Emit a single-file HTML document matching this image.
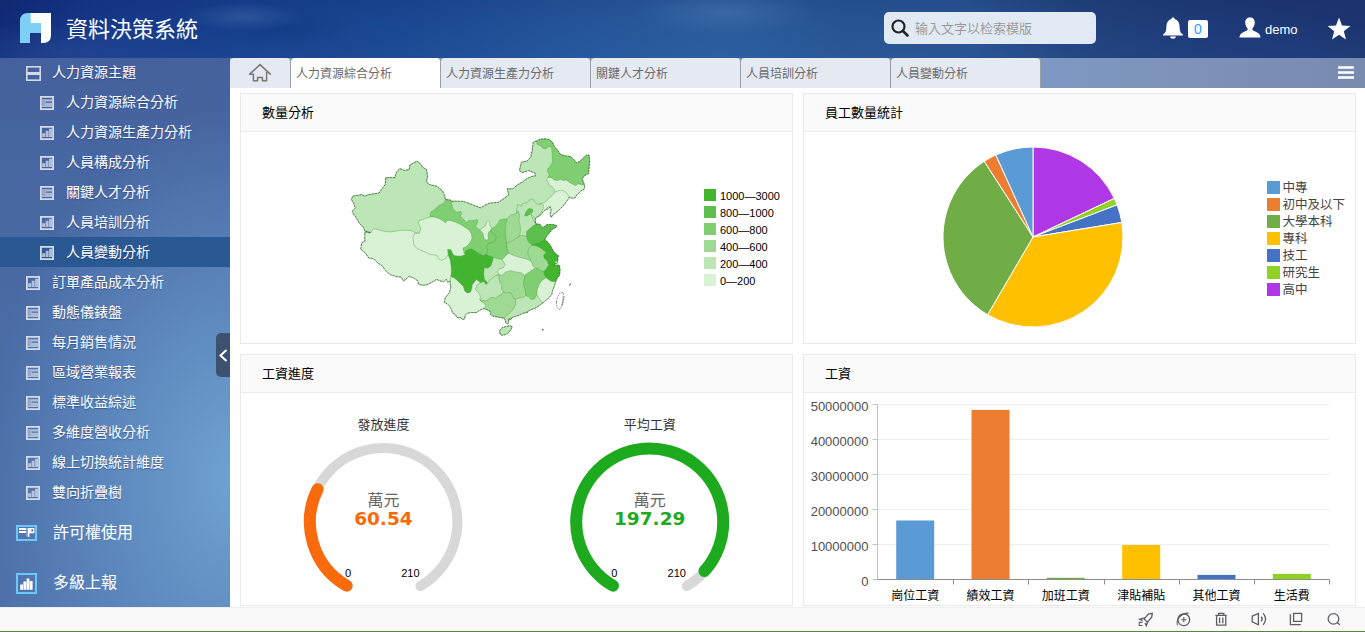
<!DOCTYPE html>
<html lang="zh-Hant">
<head>
<meta charset="utf-8">
<title>資料決策系統</title>
<style>
*{box-sizing:border-box;margin:0;padding:0}
html,body{width:1365px;height:632px;overflow:hidden;background:#fff;font-family:"Liberation Sans","Noto Sans CJK TC",sans-serif;}
#hdr{position:absolute;left:0;top:0;width:1365px;height:58px;
 background:
  radial-gradient(ellipse 60px 14px at 245px 17px,rgba(70,110,170,.45),rgba(70,110,170,0) 100%),
  radial-gradient(ellipse 70px 22px at 285px 28px,rgba(10,50,120,.35),rgba(10,50,120,0) 100%),
  radial-gradient(ellipse 90px 22px at 725px 12px,rgba(80,125,180,.4),rgba(80,125,180,0) 100%),
  radial-gradient(ellipse 140px 30px at 60px 52px,rgba(50,90,160,.3),rgba(50,90,160,0) 100%),
  linear-gradient(180deg,rgba(0,10,60,.08) 0%,rgba(0,0,0,0) 40%,rgba(80,130,200,.08) 100%),
  linear-gradient(90deg,#122a76 0%,#153789 7%,#17408c 18%,#1a4892 30%,#245498 42%,#2a5c9c 53%,#265492 62%,#27528f 71%,#21407c 80%,#1e3a78 88%,#1c3572 100%);}
#logo{position:absolute;left:20px;top:13px}
#ttl{position:absolute;left:66px;top:15px;font-size:22px;line-height:30px;color:#fff;letter-spacing:0px;white-space:nowrap}
#srch{position:absolute;left:884px;top:12px;width:212px;height:32px;border-radius:5px;background:#e1eaf4}
#srch span{position:absolute;left:31px;top:8px;font-size:13px;line-height:18px;color:#9a9a9a;white-space:nowrap;font-family:"Liberation Sans","Noto Sans CJK SC",sans-serif}
#srch svg{position:absolute;left:6px;top:6px}
.hi{position:absolute}
#badge{position:absolute;left:1188px;top:20px;width:20px;height:18px;background:#fff;border-radius:2px;color:#2a9df4;font-size:14px;line-height:18px;text-align:center}
#uname{position:absolute;left:1265px;top:22px;font-size:13px;line-height:16px;color:#fff}
#side{position:absolute;left:0;top:58px;width:230px;height:549px;overflow:hidden;
 background:
  radial-gradient(ellipse 250px 370px at 235px 420px,rgba(114,168,214,.9),rgba(114,168,214,0) 100%),
  linear-gradient(180deg,#45619d 0%,#4766a2 20%,#4a6ba6 50%,#4d70aa 100%);}
.it{position:absolute;left:0;width:230px;height:30px;color:#fff;font-size:14px;line-height:30px;white-space:nowrap;text-shadow:0 1px 1px rgba(30,50,100,.5)}
.it svg{position:absolute;top:8.5px}
.it.l1 svg{left:26px}.it.l1 span{position:absolute;left:52px;top:0px}
.it.l2 svg{left:40px}.it.l2 span{position:absolute;left:66px;top:0px}
.it.sel{background:#2a5893;}
.big{position:absolute;left:0;width:230px;height:50px;color:#fff;font-size:16px;line-height:50px;white-space:nowrap}
.big svg{position:absolute;left:0;top:0}
.big span{position:absolute;left:53px;top:-1px}
#hnd{position:absolute;left:216px;top:333px;width:14px;height:44px;background:#3d5270;border-radius:5px 0 0 5px}
#tabs{position:absolute;left:230px;top:58px;width:1135px;height:30px;background:linear-gradient(90deg,#7d99c3 0%,#7d99c3 71%,#7d92b9 85%,#788aae 100%)}
.tab{position:absolute;top:0;height:30px;background:#e4e9f2;border-radius:4px 4px 0 0;border-right:1px solid #9a9fa8;font-size:12px;line-height:32px;color:#6b6b6b;padding-left:5px;white-space:nowrap}
.tab.act{background:#fff}
#main{position:absolute;left:230px;top:88px;width:1135px;height:519px;background:#fff}
.pn{position:absolute;border:1px solid #e9e9e9;background:#fff}
.pn .ph{position:absolute;left:0;top:0;right:0;height:38px;background:#fafafa;border-bottom:1px solid #ebebeb;font-size:13px;line-height:38px;color:#000;padding-left:21px;letter-spacing:0}
#foot{position:absolute;left:0;top:607px;width:1365px;height:25px;background:#f9f9f9;border-top:1px solid #eeeeee}
#foot i{position:absolute;left:0;bottom:0;width:1365px;height:1px;background:#5f8044}
svg text{font-family:"Liberation Sans","Noto Sans CJK TC",sans-serif}
</style>
</head>
<body>
<div id="hdr">
 <svg id="logo" width="32" height="31" viewBox="0 0 32 31"><path d="M0 8 Q0 0 8 0 L11 0 L11 10 L21 10 L21 20 L10 20 L10 30 L0 30 Z" fill="#7fcef5"/><path d="M10.7 0 L31 0 L31 22 Q31 30 23 30 L21 30 L21 10 L10.7 10 Z" fill="#fff"/></svg>
 <div id="ttl">資料決策系統</div>
 <div id="srch"><svg width="20" height="20" viewBox="0 0 20 20"><circle cx="8.5" cy="8.5" r="6" fill="none" stroke="#222" stroke-width="2.2"/><path d="M13 13 L17.5 17.5" stroke="#222" stroke-width="2.6" stroke-linecap="round"/></svg><span>输入文字以检索模版</span></div>
 <svg class="hi" style="left:1161px;top:16px" width="24" height="24" viewBox="0 0 24 24"><path d="M12 1.5 C13 1.5 13.6 2.2 13.6 3 C17 4 18.6 6.8 18.6 10.5 C18.6 15 19.6 17 22 18.6 L22 19.4 L2 19.4 L2 18.6 C4.4 17 5.4 15 5.4 10.5 C5.4 6.8 7 4 10.4 3 C10.4 2.2 11 1.5 12 1.5 Z" fill="#fff"/><path d="M9 20.6 L15 20.6 C14.6 22 13.4 22.8 12 22.8 C10.6 22.8 9.4 22 9 20.6 Z" fill="#fff"/></svg>
 <div id="badge">0</div>
 <svg class="hi" style="left:1239px;top:17px" width="22" height="21" viewBox="0 0 22 21"><path d="M11 0.5 C14 0.5 15.8 2.6 15.8 5.6 C15.8 8 14.8 10.2 13.4 11.4 C13.2 12.6 13.6 13.4 15 14 C18.4 15.4 21 16.6 21.6 20.5 L0.4 20.5 C1 16.6 3.6 15.4 7 14 C8.4 13.4 8.8 12.6 8.6 11.4 C7.2 10.2 6.2 8 6.2 5.6 C6.2 2.6 8 0.5 11 0.5 Z" fill="#fff"/></svg>
 <div id="uname">demo</div>
 <svg class="hi" style="left:1327px;top:17px" width="24" height="23" viewBox="0 0 24 23"><path d="M12 0.6 L15 8.6 L23.4 9 L16.8 14.2 L19 22.4 L12 17.8 L5 22.4 L7.2 14.2 L0.6 9 L9 8.6 Z" fill="#fff"/></svg>
</div>
<div id="side">
 <div class="it l1" style="top:-1px"><svg width="15" height="15" viewBox="0 0 15 15"><rect x="0.8" y="0.8" width="13.4" height="13.4" fill="none" stroke="#d3d9e8" stroke-width="1.6"/><rect x="1" y="6" width="13" height="3" fill="#d3d9e8"/></svg><span>人力資源主題</span></div>
 <div class="it l2" style="top:29px"><svg width="14" height="14" viewBox="0 0 14 14"><path fill-rule="evenodd" fill="#d3dae8" d="M0 0H14V14H0Z M1.8 1.8H12.2V12.2H1.8Z"/><path fill-rule="evenodd" fill="#d3dae8" opacity=".72" d="M1.8 3.2H12.2V11H1.8Z M5.6 5.6V6.8H12.2V5.6Z"/><path d="M1.8 4.2H4.8V10H1.8Z" fill="#4a69a4" opacity=".25"/></svg><span>人力資源綜合分析</span></div>
 <div class="it l2" style="top:59px"><svg width="14" height="14" viewBox="0 0 14 14"><path fill-rule="evenodd" fill="#d3dae8" d="M0 0H14V14H0Z M1.8 1.8H12.2V12.2H1.8Z"/><path fill="#d3dae8" opacity=".78" d="M2.2 7.2H5.2V11H2.2Z M5.7 4.8H8.6V11H5.7Z M9.1 2.8H12V11H9.1Z"/></svg><span>人力資源生產力分析</span></div>
 <div class="it l2" style="top:89px"><svg width="14" height="14" viewBox="0 0 14 14"><path fill-rule="evenodd" fill="#d3dae8" d="M0 0H14V14H0Z M1.8 1.8H12.2V12.2H1.8Z"/><path fill="#d3dae8" opacity=".78" d="M2.2 7.2H5.2V11H2.2Z M5.7 4.8H8.6V11H5.7Z M9.1 2.8H12V11H9.1Z"/></svg><span>人員構成分析</span></div>
 <div class="it l2" style="top:119px"><svg width="14" height="14" viewBox="0 0 14 14"><path fill-rule="evenodd" fill="#d3dae8" d="M0 0H14V14H0Z M1.8 1.8H12.2V12.2H1.8Z"/><path fill-rule="evenodd" fill="#d3dae8" opacity=".72" d="M1.8 3.2H12.2V11H1.8Z M5.6 5.6V6.8H12.2V5.6Z"/><path d="M1.8 4.2H4.8V10H1.8Z" fill="#4a69a4" opacity=".25"/></svg><span>關鍵人才分析</span></div>
 <div class="it l2" style="top:149px"><svg width="14" height="14" viewBox="0 0 14 14"><path fill-rule="evenodd" fill="#d3dae8" d="M0 0H14V14H0Z M1.8 1.8H12.2V12.2H1.8Z"/><path fill="#d3dae8" opacity=".78" d="M2.2 7.2H5.2V11H2.2Z M5.7 4.8H8.6V11H5.7Z M9.1 2.8H12V11H9.1Z"/></svg><span>人員培訓分析</span></div>
 <div class="it l2 sel" style="top:179px"><svg width="14" height="14" viewBox="0 0 14 14"><path fill-rule="evenodd" fill="#d3dae8" d="M0 0H14V14H0Z M1.8 1.8H12.2V12.2H1.8Z"/><path fill="#d3dae8" opacity=".78" d="M2.2 7.2H5.2V11H2.2Z M5.7 4.8H8.6V11H5.7Z M9.1 2.8H12V11H9.1Z"/></svg><span>人員變動分析</span></div>
 <div class="it l1" style="top:209px"><svg width="14" height="14" viewBox="0 0 14 14"><path fill-rule="evenodd" fill="#d3dae8" d="M0 0H14V14H0Z M1.8 1.8H12.2V12.2H1.8Z"/><path fill="#d3dae8" opacity=".78" d="M2.2 7.2H5.2V11H2.2Z M5.7 4.8H8.6V11H5.7Z M9.1 2.8H12V11H9.1Z"/></svg><span>訂單產品成本分析</span></div>
 <div class="it l1" style="top:239px"><svg width="14" height="14" viewBox="0 0 14 14"><path fill-rule="evenodd" fill="#d3dae8" d="M0 0H14V14H0Z M1.8 1.8H12.2V12.2H1.8Z"/><path fill-rule="evenodd" fill="#d3dae8" opacity=".72" d="M1.8 3.2H12.2V11H1.8Z M5.6 5.6V6.8H12.2V5.6Z"/><path d="M1.8 4.2H4.8V10H1.8Z" fill="#4a69a4" opacity=".25"/></svg><span>動態儀錶盤</span></div>
 <div class="it l1" style="top:269px"><svg width="14" height="14" viewBox="0 0 14 14"><path fill-rule="evenodd" fill="#d3dae8" d="M0 0H14V14H0Z M1.8 1.8H12.2V12.2H1.8Z"/><path fill-rule="evenodd" fill="#d3dae8" opacity=".72" d="M1.8 3.2H12.2V11H1.8Z M5.6 5.6V6.8H12.2V5.6Z"/><path d="M1.8 4.2H4.8V10H1.8Z" fill="#4a69a4" opacity=".25"/></svg><span>每月銷售情況</span></div>
 <div class="it l1" style="top:299px"><svg width="14" height="14" viewBox="0 0 14 14"><path fill-rule="evenodd" fill="#d3dae8" d="M0 0H14V14H0Z M1.8 1.8H12.2V12.2H1.8Z"/><path fill-rule="evenodd" fill="#d3dae8" opacity=".72" d="M1.8 3.2H12.2V11H1.8Z M5.6 5.6V6.8H12.2V5.6Z"/><path d="M1.8 4.2H4.8V10H1.8Z" fill="#4a69a4" opacity=".25"/></svg><span>區域營業報表</span></div>
 <div class="it l1" style="top:329px"><svg width="14" height="14" viewBox="0 0 14 14"><path fill-rule="evenodd" fill="#d3dae8" d="M0 0H14V14H0Z M1.8 1.8H12.2V12.2H1.8Z"/><path fill-rule="evenodd" fill="#d3dae8" opacity=".72" d="M1.8 3.2H12.2V11H1.8Z M5.6 5.6V6.8H12.2V5.6Z"/><path d="M1.8 4.2H4.8V10H1.8Z" fill="#4a69a4" opacity=".25"/></svg><span>標準收益綜述</span></div>
 <div class="it l1" style="top:359px"><svg width="14" height="14" viewBox="0 0 14 14"><path fill-rule="evenodd" fill="#d3dae8" d="M0 0H14V14H0Z M1.8 1.8H12.2V12.2H1.8Z"/><path fill-rule="evenodd" fill="#d3dae8" opacity=".72" d="M1.8 3.2H12.2V11H1.8Z M5.6 5.6V6.8H12.2V5.6Z"/><path d="M1.8 4.2H4.8V10H1.8Z" fill="#4a69a4" opacity=".25"/></svg><span>多維度營收分析</span></div>
 <div class="it l1" style="top:389px"><svg width="14" height="14" viewBox="0 0 14 14"><path fill-rule="evenodd" fill="#d3dae8" d="M0 0H14V14H0Z M1.8 1.8H12.2V12.2H1.8Z"/><path fill="#d3dae8" opacity=".78" d="M2.2 7.2H5.2V11H2.2Z M5.7 4.8H8.6V11H5.7Z M9.1 2.8H12V11H9.1Z"/></svg><span>線上切換統計維度</span></div>
 <div class="it l1" style="top:419px"><svg width="14" height="14" viewBox="0 0 14 14"><path fill-rule="evenodd" fill="#d3dae8" d="M0 0H14V14H0Z M1.8 1.8H12.2V12.2H1.8Z"/><path fill="#d3dae8" opacity=".78" d="M2.2 7.2H5.2V11H2.2Z M5.7 4.8H8.6V11H5.7Z M9.1 2.8H12V11H9.1Z"/></svg><span>雙向折疊樹</span></div>
 <div class="big" style="top:451px"><div style="position:absolute;left:16px;top:16px;width:21px;height:16px"><svg width="21" height="16" viewBox="0 0 21 16"><rect x="1" y="1" width="19" height="14" fill="none" stroke="#6cc9f7" stroke-width="2"/><path d="M3 3 H10 V5 H3 Z M3 6 H10 V8 H3 Z" fill="#fff"/><path d="M11 3 V11.5" stroke="#fff" stroke-width="0.7" opacity=".9"/><path fill-rule="evenodd" d="M12 3 H18.4 V8.2 H13.4 V12 H12 Z M15.4 4.2 V6.4 H17.2 V4.2 Z" fill="#fff"/></svg></div><span>許可權使用</span></div>
 <div class="big" style="top:501px"><div style="position:absolute;left:16px;top:14px;width:21px;height:21px"><svg width="21" height="21" viewBox="0 0 21 21"><rect x="1" y="1" width="19" height="19" fill="none" stroke="#6cc9f7" stroke-width="2"/><path d="M4.2 11.4 H7 V16.8 H4.2 Z M7.4 8.6 H10.2 V16.8 H7.4 Z M10.6 5.4 H13.4 V16.8 H10.6 Z M13.8 8 H16.6 V16.8 H13.8 Z" fill="#fff"/></svg></div><span>多級上報</span></div>
</div>
<div id="hnd"><svg width="14" height="44" viewBox="0 0 14 44"><path d="M10.5 17 L4.5 22.5 L10.5 28" fill="none" stroke="#fff" stroke-width="2"/></svg></div>
<div id="tabs">
 <div class="tab" style="left:0;width:61px"><svg style="position:absolute;left:18px;top:5px" width="24" height="20" viewBox="0 0 24 20"><path d="M1.2 11.6 L12 1.6 L22.8 11.6 M1.6 11.3 H5.4 V17.7 H9.6 V14.6 H14.4 V17.7 H18.6 V9" fill="none" stroke="#777" stroke-width="1.5" stroke-linejoin="miter"/></svg></div>
 <div class="tab act" style="left:61px;width:150px">人力資源綜合分析</div>
 <div class="tab" style="left:211px;width:150px">人力資源生產力分析</div>
 <div class="tab" style="left:361px;width:150px">關鍵人才分析</div>
 <div class="tab" style="left:511px;width:150px">人員培訓分析</div>
 <div class="tab" style="left:661px;width:150px">人員變動分析</div>
 <svg style="position:absolute;left:1107px;top:6.5px" width="18" height="16" viewBox="0 0 18 16"><path d="M1 2.5 H17 M1 7.5 H17 M1 12.5 H17" stroke="#fff" stroke-width="2.4"/></svg>
</div>
<div id="main">
 <div class="pn" id="p1" style="left:10px;top:5px;width:553px;height:251px"><div class="ph">數量分析</div><!--MAP0--><svg style="position:absolute;left:0;top:0" width="551" height="249" viewBox="0 0 551 249">
<g stroke="#46a03c" stroke-opacity="0.75" stroke-width="0.55" stroke-linejoin="round">
<path d="M211.3 107.1 L222.7 107.4 L229.0 109.8 L239.3 113.8 L248.0 109.3 L257.5 108.2 L263.1 104.3 L267.8 100.8 L266.2 94.8 L271.8 94.8 L276.5 90.8 L281.2 88.1 L286.0 84.5 L290.7 82.4 L294.7 81.8 L293.9 79.0 L287.6 76.6 L281.2 78.6 L278.4 76.6 L280.4 68.2 L286.0 67.1 L289.9 63.1 L291.0 56.8 L292.3 48.1 L295.5 47.0 L300.2 45.7 L309.7 48.9 L319.2 64.7 L319.2 88.4 L319.2 104.3 L306.5 115.3 L287.6 120.1 L271.8 129.6 L259.1 139.1 L238.5 139.1 L225.9 134.3 L216.4 123.2 L208.5 110.6Z" fill="#bce6b5"/>
<path d="M204.4 105.8 L203.6 101.4 L201.3 96.6 L195.7 92.2 L188.6 90.6 L185.4 87.9 L186.6 82.4 L185.4 75.3 L181.5 73.2 L179.1 69.4 L176.0 67.0 L168.8 71.0 L168.1 75.7 L163.3 76.4 L158.6 74.5 L155.4 78.4 L153.8 83.6 L144.8 83.6 L144.3 90.3 L142.0 93.4 L138.0 99.0 L127.7 100.6 L123.8 102.1 L120.6 100.6 L111.9 102.1 L110.3 105.3 L112.7 109.3 L114.3 114.0 L111.1 117.2 L112.7 120.3 L115.1 123.5 L118.2 129.0 L122.2 133.0 L123.8 136.9 L151.4 144.1 L183.1 144.1 L198.9 125.1 L209.2 109.3Z" fill="#bce6b5"/>
<path d="M123.8 137.9 L129.3 139.0 L132.5 134.7 L138.0 135.8 L143.5 137.4 L149.9 137.9 L159.4 136.4 L169.6 136.4 L173.6 138.3 L178.3 139.3 L183.1 135.5 L214.7 149.7 L217.9 189.3 L209.2 186.9 L206.8 188.5 L205.2 185.3 L202.8 187.7 L198.9 186.9 L195.7 185.3 L191.8 187.7 L186.2 190.8 L181.5 191.2 L177.5 190.1 L176.8 186.9 L173.6 184.5 L168.1 182.1 L164.9 185.3 L162.5 186.9 L160.1 182.9 L156.2 182.9 L149.1 180.6 L144.3 176.3 L141.2 171.9 L136.4 168.7 L132.5 164.7 L127.7 164.0 L124.6 159.2 L119.8 155.3 L120.6 148.9 L123.8 147.4Z" fill="#d9f1d5"/>
<path d="M295.6 48.0 L298.1 45.4 L303.2 44.8 L308.2 45.4 L311.4 48.0 L313.3 52.4 L317.1 56.8 L319.6 60.6 L324.7 61.9 L329.8 62.5 L332.9 65.7 L335.5 68.8 L338.6 67.6 L342.4 63.8 L345.6 61.0 L348.1 61.3 L348.7 66.3 L348.1 73.9 L347.5 79.6 L343.7 81.5 L341.2 84.7 L343.1 89.7 L343.4 91.4 L332.3 94.2 L313.3 89.1 L307.0 84.0 L308.2 80.2 L306.3 77.7 L307.0 74.5 L309.5 72.0 L311.4 68.2 L311.4 62.5 L310.8 54.9 L310.1 53.0 L307.6 52.4 L305.1 54.9 L301.9 54.3 L300.0 51.8 L296.2 50.5Z" fill="#7fce72"/>
<path d="M305.7 85.3 L307.0 83.4 L310.1 83.4 L313.3 85.9 L316.5 86.6 L319.6 85.3 L322.2 86.6 L325.3 85.9 L328.5 88.5 L331.0 89.7 L334.2 91.6 L337.4 89.7 L339.9 90.4 L342.4 91.0 L343.7 91.6 L343.1 95.4 L339.9 96.7 L338.0 99.2 L335.5 101.1 L334.2 103.7 L331.0 104.3 L328.5 103.0 L324.7 106.8 L314.6 100.5 L313.9 98.0 L313.3 95.4 L311.4 92.9 L308.2 91.6 L307.0 88.5Z" fill="#d9f1d5"/>
<path d="M313.9 98.0 L315.8 97.3 L319.0 96.1 L322.2 96.7 L324.7 98.0 L326.6 100.5 L328.5 103.0 L327.9 104.2 L324.7 108.6 L322.2 111.8 L319.0 114.9 L315.8 118.1 L312.7 120.0 L310.1 123.5 L309.3 120.0 L310.1 116.2 L309.5 113.0 L307.6 112.4 L304.4 115.6 L301.9 118.1 L299.4 121.3 L294.9 123.8 L294.3 116.2 L298.1 109.9 L300.4 109.2 L303.2 108.7 L306.3 106.2 L309.5 103.0 L312.0 100.5Z" fill="#d9f1d5"/>
<path d="M189.4 122.7 L183.1 125.1 L178.0 126.6 L177.5 129.8 L179.9 134.5 L178.3 139.3 L173.6 139.4 L172.0 143.4 L172.8 150.5 L176.0 154.5 L183.1 157.6 L189.4 160.5 L195.7 161.1 L197.3 164.7 L200.5 166.3 L204.4 164.7 L207.6 160.0 L209.1 165.5 L214.2 166.8 L225.6 164.2 L229.4 150.3 L232.2 144.0 L230.6 137.6 L227.5 133.8 L223.1 130.1 L216.7 127.5 L211.7 125.6 L206.6 125.0 L204.1 126.9 L200.5 123.5 L195.7 121.9Z" fill="#d9f1d5"/>
<path d="M204.4 105.5 L209.6 106.0 L211.0 107.4 L210.6 110.2 L211.5 113.6 L213.4 116.4 L215.8 118.3 L219.6 117.4 L220.8 119.3 L219.1 122.1 L221.5 124.5 L223.9 126.8 L225.8 128.7 L227.2 126.8 L230.5 126.4 L233.3 126.4 L236.2 125.4 L236.7 127.8 L235.7 130.2 L234.3 132.5 L237.1 134.9 L238.6 135.9 L252.2 135.1 L257.2 144.0 L242.0 164.2 L223.1 159.2 L222.0 153.9 L224.8 152.9 L227.2 151.0 L229.6 147.7 L231.0 144.4 L230.5 140.1 L228.6 136.8 L225.8 134.4 L222.0 132.1 L218.2 129.7 L213.4 127.8 L209.6 126.4 L206.3 126.4 L204.4 128.7 L201.6 126.4 L198.2 124.5 L193.5 123.0 L189.7 123.0 L189.2 120.2 L190.2 117.8 L193.0 115.9 L195.4 113.6 L198.2 111.2 L201.1 110.2 L203.5 108.3Z" fill="#7fce72"/>
<path d="M238.6 135.9 L240.9 134.4 L244.3 132.1 L245.7 127.8 L247.1 126.4 L248.5 127.8 L249.0 131.6 L250.9 134.4 L249.5 136.8 L247.6 138.2 L247.1 141.6 L247.6 144.9 L245.7 146.3 L243.3 145.3 L242.4 142.0 L241.9 139.2Z" fill="#d9f1d5"/>
<path d="M276.6 110.5 L280.4 112.4 L281.0 109.9 L286.1 108.6 L288.0 106.1 L291.8 104.8 L294.3 108.6 L298.7 111.1 L300.4 109.2 L302.5 111.1 L302.2 114.9 L299.4 120.0 L294.9 123.8 L293.7 125.7 L294.9 129.9 L298.1 139.0 L285.5 144.0 L276.6 142.8 L274.1 126.3Z" fill="#bce6b5"/>
<path d="M266.1 125.0 L269.9 121.2 L275.6 119.3 L277.2 116.8 L278.5 121.2 L277.9 126.3 L279.1 131.3 L279.5 136.4 L278.7 140.8 L274.9 147.8 L263.6 151.6 L262.3 137.6 L263.6 126.3Z" fill="#9fda95"/>
<path d="M250.3 134.9 L253.4 133.2 L256.6 130.1 L258.5 126.3 L262.3 125.0 L266.1 125.0 L264.8 130.1 L264.2 136.4 L264.8 144.0 L265.5 149.0 L266.1 154.1 L267.4 159.2 L267.4 169.3 L249.6 169.3 L245.2 160.4 L246.5 156.6 L245.8 153.5 L246.5 150.3 L249.6 149.0 L253.4 147.8 L255.3 144.0 L254.7 140.8 L252.2 139.5 L249.6 137.6Z" fill="#7fce72"/>
<path d="M206.6 155.4 L209.8 155.6 L211.7 159.8 L213.6 161.7 L219.3 162.3 L223.7 161.1 L224.3 157.3 L226.2 156.0 L230.0 154.7 L234.4 157.3 L238.2 159.8 L242.0 161.7 L245.2 160.4 L252.2 163.6 L256.0 166.8 L253.4 176.9 L249.6 191.3 L237.0 201.4 L218.0 197.6 L209.8 182.5 L210.4 178.2 L210.1 171.8 L209.1 165.5 L207.2 160.4Z" fill="#42b42f"/>
<path d="M209.1 186.9 L209.8 182.5 L212.9 183.7 L216.1 186.3 L219.3 189.4 L222.4 192.6 L223.7 197.0 L226.2 198.9 L229.4 198.3 L230.6 195.1 L231.3 190.7 L233.8 187.5 L235.7 185.6 L239.5 188.8 L242.0 197.6 L247.1 209.0 L245.8 215.4 L243.3 214.7 L242.0 214.7 L238.2 216.6 L235.7 218.5 L230.6 218.5 L226.2 219.2 L224.3 221.1 L223.7 224.9 L221.2 225.5 L219.9 223.6 L216.1 223.6 L214.2 220.4 L211.7 219.2 L210.4 215.4 L208.5 212.2 L206.0 209.7 L203.4 208.4 L204.1 204.0 L206.6 200.8 L208.5 198.3 L209.8 193.2 L209.1 188.8Z" fill="#d9f1d5"/>
<path d="M265.5 149.0 L269.3 147.8 L273.7 145.2 L277.5 142.7 L280.0 141.4 L285.1 142.1 L292.7 144.0 L292.7 169.3 L280.0 165.5 L267.4 161.7 L267.4 159.2 L266.1 154.1Z" fill="#9fda95"/>
<path d="M294.9 129.9 L298.7 130.1 L301.9 133.7 L305.7 130.7 L310.8 130.4 L315.8 131.4 L315.2 133.3 L311.4 135.2 L308.2 139.0 L305.7 142.1 L303.8 145.3 L301.9 151.6 L291.8 152.9 L291.2 151.0 L288.0 148.5 L286.1 145.3 L285.5 141.5 L285.5 137.7 L288.0 135.2 L291.8 132.0Z" fill="#5dc04e"/>
<path d="M261.0 165.5 L267.4 159.2 L270.5 160.4 L274.9 162.3 L280.0 163.6 L285.1 164.9 L289.5 166.8 L296.5 171.8 L295.2 179.4 L285.1 184.5 L258.5 184.5 L254.7 174.4Z" fill="#d9f1d5"/>
<path d="M252.2 163.6 L261.0 165.5 L264.2 170.6 L262.3 173.7 L257.9 175.0 L256.6 177.5 L257.9 180.7 L257.9 180.7 L254.7 181.8 L249.6 187.5 L245.2 191.3 L246.5 188.8 L243.3 185.0 L242.7 179.9 L243.3 173.6 L246.5 174.2 L249.6 172.3 L251.5 167.3Z" fill="#bce6b5"/>
<path d="M235.7 191.3 L239.5 188.8 L242.7 187.5 L245.2 190.7 L249.6 185.0 L254.7 181.8 L257.9 180.9 L262.3 183.7 L263.6 198.9 L249.6 207.8 L240.8 207.8 L238.9 205.2 L239.5 202.7 L237.0 197.6 L234.4 195.7 L235.1 193.2Z" fill="#bce6b5"/>
<path d="M291.2 151.0 L300.6 151.6 L309.5 171.9 L301.9 178.2 L301.3 176.9 L298.1 175.1 L294.3 173.8 L291.8 171.9 L290.5 168.1 L289.3 164.9 L287.4 161.8 L286.7 158.0 L288.0 154.2Z" fill="#9fda95"/>
<path d="M303.8 145.3 L307.0 148.5 L309.5 151.6 L311.4 155.4 L313.9 159.2 L317.7 161.8 L316.5 164.3 L317.1 166.2 L314.6 169.4 L312.0 173.2 L308.2 171.3 L307.0 169.4 L306.3 166.8 L303.2 164.3 L302.5 161.1 L305.1 159.2 L303.2 156.7 L300.6 154.8 L297.5 152.9 L294.3 151.6 L291.2 151.0 L293.7 149.7 L297.5 149.1 L300.6 147.2Z" fill="#42b42f"/>
<path d="M257.9 180.9 L261.0 181.2 L264.8 178.0 L269.9 176.8 L274.9 178.0 L280.0 178.7 L283.2 181.2 L287.6 185.0 L287.6 204.0 L269.9 207.8 L262.3 197.6 L260.4 195.1 L261.0 191.3 L259.1 188.8 L257.9 185.0Z" fill="#9fda95"/>
<path d="M293.2 174.4 L297.0 175.0 L300.8 176.9 L302.7 177.5 L305.8 183.8 L297.0 194.0 L295.7 206.6 L288.1 206.6 L284.9 201.6 L284.3 196.5 L282.4 190.2 L283.1 185.1 L284.3 180.7 L288.1 178.2Z" fill="#7fce72"/>
<path d="M309.6 169.9 L313.4 171.2 L318.5 171.2 L319.1 176.3 L318.5 181.3 L316.0 184.5 L314.7 187.6 L312.2 190.2 L307.1 187.6 L305.2 183.8 L303.3 180.7 L302.7 177.5 L305.2 175.0 L307.1 171.8Z" fill="#42b42f"/>
<path d="M305.2 183.8 L307.7 185.7 L310.9 187.6 L314.7 187.6 L313.4 192.1 L311.5 196.5 L310.9 200.3 L307.7 204.1 L304.6 206.6 L301.4 209.2 L297.0 209.2 L295.7 200.3 L296.3 195.2 L298.2 190.2 L300.8 186.4Z" fill="#d9f1d5"/>
<path d="M238.9 205.2 L240.8 206.3 L244.6 207.1 L247.7 205.2 L250.9 203.3 L254.7 204.0 L257.2 202.1 L261.0 200.2 L262.3 197.6 L264.8 198.9 L268.0 198.3 L270.5 199.5 L271.8 203.3 L274.3 205.2 L280.0 210.3 L269.9 225.5 L262.9 224.2 L259.8 223.6 L256.0 223.0 L252.2 222.3 L249.6 220.4 L249.0 217.3 L246.5 216.0 L243.3 214.7 L244.6 212.8 L243.9 209.7 L239.5 206.5Z" fill="#9fda95"/>
<path d="M274.3 205.2 L275.5 204.7 L275.5 204.7 L278.0 204.1 L281.8 203.5 L284.9 201.6 L287.5 202.8 L290.0 205.4 L293.8 204.7 L295.7 200.3 L297.6 204.1 L299.5 206.0 L301.4 209.2 L298.2 211.7 L294.4 214.2 L290.6 215.5 L286.8 217.4 L284.9 218.7 L281.8 219.3 L278.0 221.2 L274.2 222.5 L270.4 223.7 L267.2 225.0 L267.9 228.2 L266.6 230.1 L264.7 228.8 L264.1 225.6 L262.8 224.4 L262.9 224.2 L264.8 222.3 L268.0 219.8 L271.2 216.6 L273.7 212.8 L274.9 209.0Z" fill="#bce6b5"/>
<path d="M283.6 121.9 L284.8 118.1 L288.0 114.3 L291.8 115.6 L291.2 118.7 L289.3 120.0 L286.1 121.9Z" fill="#5dc04e"/>
<path d="M289.9 120.0 L292.4 122.5 L294.3 124.4 L294.3 129.5 L292.4 126.3 L291.2 123.2Z" fill="#bce6b5"/>
<path d="M314.1 167.4 L316.0 166.8 L317.0 168.7 L315.3 169.9 L314.1 168.7Z" fill="#d9f1d5"/>
<path d="M258.5 236.9 L261.0 233.7 L264.8 232.5 L269.3 231.8 L271.2 232.5 L269.9 235.6 L267.4 238.8 L264.2 240.7 L261.0 241.3 L259.1 240.1Z" fill="#bce6b5"/>
</g>
<path d="M295.5 47.0 L292.3 48.1 L291.0 56.8 L289.9 63.1 L286.0 67.1 L280.4 68.2 L278.4 76.6 L281.2 78.6 L287.6 76.6 L293.9 79.0 L294.7 81.8 L290.7 82.4 L286.0 84.5 L281.2 88.1 L276.5 90.8 L271.8 94.8 L266.2 94.8 L267.8 100.8 L263.1 104.3 L257.5 108.2 L248.0 109.3 L239.3 113.8 L229.0 109.8 L222.7 107.4 L211.3 107.1 L211.0 107.5 L211.0 107.4 L209.6 106.0 L204.4 105.5 L204.4 105.5 L203.6 101.4 L201.3 96.6 L195.7 92.2 L188.6 90.6 L185.4 87.9 L186.6 82.4 L185.4 75.3 L181.5 73.2 L179.1 69.4 L176.0 67.0 L168.8 71.0 L168.1 75.7 L163.3 76.4 L158.6 74.5 L155.4 78.4 L153.8 83.6 L144.8 83.6 L144.3 90.3 L142.0 93.4 L138.0 99.0 L127.7 100.6 L123.8 102.1 L120.6 100.6 L111.9 102.1 L110.3 105.3 L112.7 109.3 L114.3 114.0 L111.1 117.2 L112.7 120.3 L115.1 123.5 L118.2 129.0 L122.2 133.0 L123.8 136.9 L129.7 138.5 L129.3 139.0 L123.8 137.9 L123.8 147.4 L120.6 148.9 L119.8 155.3 L124.6 159.2 L127.7 164.0 L132.5 164.7 L136.4 168.7 L141.2 171.9 L144.3 176.3 L149.1 180.6 L156.2 182.9 L160.1 182.9 L162.5 186.9 L164.9 185.3 L168.1 182.1 L173.6 184.5 L176.8 186.9 L177.5 190.1 L181.5 191.2 L186.2 190.8 L191.8 187.7 L195.7 185.3 L198.9 186.9 L202.8 187.7 L205.2 185.3 L206.8 188.5 L209.1 186.9 L209.1 188.8 L209.8 193.2 L208.5 198.3 L206.6 200.8 L204.1 204.0 L203.4 208.4 L206.0 209.7 L208.5 212.2 L210.4 215.4 L211.7 219.2 L214.2 220.4 L216.1 223.6 L219.9 223.6 L221.2 225.5 L223.7 224.9 L224.3 221.1 L226.2 219.2 L230.6 218.5 L235.7 218.5 L238.2 216.6 L242.0 214.7 L243.3 214.7 L246.5 216.0 L249.0 217.3 L249.6 220.4 L252.2 222.3 L256.0 223.0 L259.8 223.6 L262.9 224.2 L262.8 224.4 L264.1 225.6 L264.7 228.8 L266.6 230.1 L267.9 228.2 L267.2 225.0 L269.9 225.5 L271.3 223.4 L274.2 222.5 L278.0 221.2 L281.8 219.3 L284.9 218.7 L286.8 217.4 L290.6 215.5 L294.4 214.2 L298.2 211.7 L301.4 209.2 L304.6 206.6 L307.7 204.1 L310.9 200.3 L311.5 196.5 L313.4 192.1 L314.7 187.6 L316.0 184.5 L318.5 181.3 L319.1 176.3 L318.5 171.2 L313.4 171.2 L313.4 171.2 L314.6 169.4 L314.7 169.2 L315.3 169.9 L317.0 168.7 L316.2 167.3 L317.1 166.2 L316.5 164.3 L317.7 161.8 L313.9 159.2 L311.4 155.4 L309.5 151.6 L307.0 148.5 L303.8 145.3 L305.7 142.1 L308.2 139.0 L311.4 135.2 L315.2 133.3 L315.8 131.4 L310.8 130.4 L305.7 130.7 L301.9 133.7 L298.7 130.1 L294.9 129.9 L294.3 127.8 L294.3 124.7 L294.9 123.8 L299.4 121.3 L301.9 118.1 L304.0 116.0 L306.5 115.3 L309.3 112.9 L309.5 113.0 L310.1 116.2 L309.3 120.0 L310.1 123.5 L312.7 120.0 L315.8 118.1 L319.0 114.9 L322.2 111.8 L324.7 108.6 L327.9 104.2 L328.5 103.0 L331.0 104.3 L334.2 103.7 L335.5 101.1 L338.0 99.2 L339.9 96.7 L343.1 95.4 L343.7 91.6 L343.3 91.4 L343.4 91.4 L343.1 89.7 L341.2 84.7 L343.7 81.5 L347.5 79.6 L348.1 73.9 L348.7 66.3 L348.1 61.3 L345.6 61.0 L342.4 63.8 L338.6 67.6 L335.5 68.8 L332.9 65.7 L329.8 62.5 L324.7 61.9 L319.6 60.6 L317.1 56.8 L313.3 52.4 L311.4 48.0 L308.2 45.4 L303.2 44.8 L298.1 45.4 L296.9 46.6ZM269.9 235.6 L271.2 232.5 L269.3 231.8 L264.8 232.5 L261.0 233.7 L258.5 236.9 L259.1 240.1 L261.0 241.3 L264.2 240.7 L267.4 238.8Z" fill="none" stroke="#1a3a18" stroke-opacity="0.85" stroke-width="0.65" stroke-dasharray="2.2 1"/>
<path d="M315.3 207.9 L316.6 202.8 L319.1 199.0 L322.3 198.4 L323.2 202.8 L322.3 207.9 L320.4 213.0 L318.5 216.1 L316.0 213.0Z" fill="#fff" stroke="#333" stroke-width="0.6" stroke-dasharray="1.6 1.2"/>
<path d="M322.3 202.2 L321.9 206.6 L320.8 211.7" fill="none" stroke="#333" stroke-width="0.5"/>
<path d="M328.2 191.2 L330.1 189.7" stroke="#222" stroke-width="0.9"/>
<path d="M285.6 218.9 L286.6 218.4" stroke="#222" stroke-width="0.9"/>
<path d="M301.0 236.2 l1.6 -0.8" stroke="#222" stroke-width="1"/>
<rect x="463" y="95" width="12" height="12" fill="#42b42f"/>
<text x="479" y="105.5" font-size="11" fill="#000">1000—3000</text>
<rect x="463" y="112" width="12" height="12" fill="#5dc04e"/>
<text x="479" y="122.5" font-size="11" fill="#000">800—1000</text>
<rect x="463" y="129" width="12" height="12" fill="#7fce72"/>
<text x="479" y="139.5" font-size="11" fill="#000">600—800</text>
<rect x="463" y="146" width="12" height="12" fill="#9fda95"/>
<text x="479" y="156.5" font-size="11" fill="#000">400—600</text>
<rect x="463" y="163" width="12" height="12" fill="#bce6b5"/>
<text x="479" y="173.5" font-size="11" fill="#000">200—400</text>
<rect x="463" y="180" width="12" height="12" fill="#d9f1d5"/>
<text x="479" y="190.5" font-size="11" fill="#000">0—200</text>
</svg><!--MAP1--></div>
 <div class="pn" id="p2" style="left:573px;top:5px;width:553px;height:251px"><div class="ph">員工數量統計</div><!--PIE0--><svg style="position:absolute;left:0;top:0" width="551" height="249" viewBox="0 0 551 249">
<path d="M229 143 L229.00 53.00 A90 90 0 0 1 310.30 104.40Z" fill="#b037e6" stroke="#fff" stroke-width="1" stroke-linejoin="round"/>
<path d="M229 143 L310.30 104.40 A90 90 0 0 1 313.08 110.89Z" fill="#91d024" stroke="#fff" stroke-width="1" stroke-linejoin="round"/>
<path d="M229 143 L313.08 110.89 A90 90 0 0 1 317.82 128.46Z" fill="#4472c4" stroke="#fff" stroke-width="1" stroke-linejoin="round"/>
<path d="M229 143 L317.82 128.46 A90 90 0 0 1 183.59 220.71Z" fill="#ffc000" stroke="#fff" stroke-width="1" stroke-linejoin="round"/>
<path d="M229 143 L183.59 220.71 A90 90 0 0 1 180.25 67.35Z" fill="#70ad47" stroke="#fff" stroke-width="1" stroke-linejoin="round"/>
<path d="M229 143 L180.25 67.35 A90 90 0 0 1 191.82 61.04Z" fill="#ed7d31" stroke="#fff" stroke-width="1" stroke-linejoin="round"/>
<path d="M229 143 L191.82 61.04 A90 90 0 0 1 229.00 53.00Z" fill="#5b9bd5" stroke="#fff" stroke-width="1" stroke-linejoin="round"/>
<rect x="463" y="87" width="13" height="13" fill="#5b9bd5"/>
<text x="478.5" y="98.3" font-size="12.5" fill="#444">中專</text>
<rect x="463" y="104" width="13" height="13" fill="#ed7d31"/>
<text x="478.5" y="115.3" font-size="12.5" fill="#444">初中及以下</text>
<rect x="463" y="121" width="13" height="13" fill="#70ad47"/>
<text x="478.5" y="132.3" font-size="12.5" fill="#444">大學本科</text>
<rect x="463" y="138" width="13" height="13" fill="#ffc000"/>
<text x="478.5" y="149.3" font-size="12.5" fill="#444">專科</text>
<rect x="463" y="155" width="13" height="13" fill="#4472c4"/>
<text x="478.5" y="166.3" font-size="12.5" fill="#444">技工</text>
<rect x="463" y="172" width="13" height="13" fill="#91d024"/>
<text x="478.5" y="183.3" font-size="12.5" fill="#444">研究生</text>
<rect x="463" y="189" width="13" height="13" fill="#b037e6"/>
<text x="478.5" y="200.3" font-size="12.5" fill="#444">高中</text>
</svg><!--PIE1--></div>
 <div class="pn" id="p3" style="left:10px;top:266px;width:553px;height:252px"><div class="ph">工資進度</div><!--GAUGE0--><svg style="position:absolute;left:0;top:0" width="551" height="250" viewBox="0 0 551 250">
<text x="142.39999999999998" y="74" font-size="13" fill="#333" text-anchor="middle">發放進度</text>
<path d="M105.40 231.09 A74 74 0 1 1 179.40 231.09" fill="none" stroke="#d8d8d8" stroke-width="10" stroke-linecap="round"/>
<path d="M105.65 230.65 A73.5 73.5 0 0 1 76.61 134.22" fill="none" stroke="#f96a0c" stroke-width="12" stroke-linecap="round"/>
<text x="142.39999999999998" y="151" font-size="16" fill="#666" text-anchor="middle">萬元</text>
<text x="142.39999999999998" y="170.20000000000005" font-size="18.5" font-weight="bold" fill="#f96a0c" text-anchor="middle" style="font-family:'DejaVu Sans',sans-serif">60.54</text>
<text x="106.99999999999997" y="222" font-size="11" fill="#000" text-anchor="middle">0</text>
<text x="169.39999999999998" y="222" font-size="11" fill="#000" text-anchor="middle">210</text>
<text x="408.70000000000005" y="74" font-size="13" fill="#333" text-anchor="middle">平均工資</text>
<path d="M371.70 231.09 A74 74 0 1 1 445.70 231.09" fill="none" stroke="#d8d8d8" stroke-width="10" stroke-linecap="round"/>
<path d="M371.95 230.65 A73.5 73.5 0 1 1 463.46 216.03" fill="none" stroke="#1eaa1e" stroke-width="12" stroke-linecap="round"/>
<text x="408.70000000000005" y="151" font-size="16" fill="#666" text-anchor="middle">萬元</text>
<text x="408.70000000000005" y="170.20000000000005" font-size="18.5" font-weight="bold" fill="#1eaa1e" text-anchor="middle" style="font-family:'DejaVu Sans',sans-serif">197.29</text>
<text x="373.30000000000007" y="222" font-size="11" fill="#000" text-anchor="middle">0</text>
<text x="435.70000000000005" y="222" font-size="11" fill="#000" text-anchor="middle">210</text>
</svg><!--GAUGE1--></div>
 <div class="pn" id="p4" style="left:573px;top:266px;width:553px;height:252px"><div class="ph">工資</div><!--BAR0--><svg style="position:absolute;left:0;top:0" width="551" height="250" viewBox="0 0 551 250">
<path d="M68.5 224.5 H73.5" stroke="#c4c4c4" stroke-width="1"/>
<text x="64.5" y="231.0" font-size="13" fill="#505050" text-anchor="end">0</text>
<path d="M73.5 189.5 H525.5" stroke="#eeeeee" stroke-width="1"/>
<path d="M68.5 189.5 H73.5" stroke="#c4c4c4" stroke-width="1"/>
<text x="64.5" y="196.0" font-size="13" fill="#505050" text-anchor="end">10000000</text>
<path d="M73.5 154.5 H525.5" stroke="#eeeeee" stroke-width="1"/>
<path d="M68.5 154.5 H73.5" stroke="#c4c4c4" stroke-width="1"/>
<text x="64.5" y="161.0" font-size="13" fill="#505050" text-anchor="end">20000000</text>
<path d="M73.5 119.5 H525.5" stroke="#eeeeee" stroke-width="1"/>
<path d="M68.5 119.5 H73.5" stroke="#c4c4c4" stroke-width="1"/>
<text x="64.5" y="126.0" font-size="13" fill="#505050" text-anchor="end">30000000</text>
<path d="M73.5 84.5 H525.5" stroke="#eeeeee" stroke-width="1"/>
<path d="M68.5 84.5 H73.5" stroke="#c4c4c4" stroke-width="1"/>
<text x="64.5" y="91.0" font-size="13" fill="#505050" text-anchor="end">40000000</text>
<path d="M73.5 49.5 H525.5" stroke="#eeeeee" stroke-width="1"/>
<path d="M68.5 49.5 H73.5" stroke="#c4c4c4" stroke-width="1"/>
<text x="64.5" y="56.0" font-size="13" fill="#505050" text-anchor="end">50000000</text>
<rect x="92.2" y="165.5" width="38" height="59.0" fill="#5b9bd5"/>
<text x="111.2" y="245" font-size="12" fill="#000" text-anchor="middle">崗位工資</text>
<rect x="167.5" y="54.9" width="38" height="169.6" fill="#ed7d31"/>
<text x="186.5" y="245" font-size="12" fill="#000" text-anchor="middle">績效工資</text>
<rect x="242.8" y="222.8" width="38" height="1.8" fill="#70ad47"/>
<text x="261.8" y="245" font-size="12" fill="#000" text-anchor="middle">加班工資</text>
<rect x="318.2" y="190.0" width="38" height="34.5" fill="#ffc000"/>
<text x="337.2" y="245" font-size="12" fill="#000" text-anchor="middle">津貼補貼</text>
<rect x="393.5" y="219.9" width="38" height="4.5" fill="#4472c4"/>
<text x="412.5" y="245" font-size="12" fill="#000" text-anchor="middle">其他工資</text>
<rect x="468.8" y="218.9" width="38" height="5.6" fill="#91d024"/>
<text x="487.8" y="245" font-size="12" fill="#000" text-anchor="middle">生活費</text>
<path d="M73.5 49.5 V224.5" stroke="#c4c4c4" stroke-width="1"/>
<path d="M73.5 224.5 H525.5" stroke="#8c8c8c" stroke-width="1"/>
<path d="M149.5 224.5 V229.5" stroke="#8c8c8c" stroke-width="1"/>
<path d="M224.5 224.5 V229.5" stroke="#8c8c8c" stroke-width="1"/>
<path d="M300.5 224.5 V229.5" stroke="#8c8c8c" stroke-width="1"/>
<path d="M375.5 224.5 V229.5" stroke="#8c8c8c" stroke-width="1"/>
<path d="M450.5 224.5 V229.5" stroke="#8c8c8c" stroke-width="1"/>
<path d="M525.5 224.5 V229.5" stroke="#8c8c8c" stroke-width="1"/>
</svg><!--BAR1--></div>
</div>
<div id="foot"><i></i><!--FOOT0--><svg style="position:absolute;left:1130px;top:-2px" width="220" height="26" viewBox="1130 606 220 26" fill="none" stroke="#5c5c66" stroke-width="1.3" stroke-linejoin="miter">
<path d="M1152.3 613.3 L1148.6 613.9 L1144.1 618.9 L1147.3 622.1 L1151.7 617.2 Z"/>
<path d="M1144.8 617.9 L1139.8 619.2 L1142.6 620.6"/>
<path d="M1147.9 621.4 L1146.3 625.6 L1145 623"/>
<path d="M1142.6 622.4 H1139.3 V625.5 H1142.6" stroke-width="1.1"/>
<circle cx="1183.8" cy="619.7" r="5.9"/>
<path d="M1181.2 619.7 H1186.4 M1183.8 617.1 V622.3" stroke-width="1.1"/>
<path d="M1177.5 625.2 C1175.8 619.8 1180.6 613 1188.6 613.1" stroke-width="1.1"/>
<path d="M1215.4 615.4 H1226.8 M1218.6 615.4 V613.4 H1223.8 V615.4 M1216.6 615.4 V625.2 H1225.8 V615.4"/>
<path d="M1219.6 617.4 V623.2 M1222.8 617.4 V623.2"/>
<path d="M1252.2 616.2 L1258.4 613.4 V624.8 L1252.2 621.8 Z"/>
<path d="M1261.2 616.8 Q1263.2 619 1261.2 621.4 M1263.2 613.4 Q1268 619 1263.2 624.8"/>
<rect x="1293.6" y="613.4" width="8" height="8"/>
<path d="M1290.4 614.2 V624.7 H1300.8"/>
<circle cx="1333.5" cy="618.9" r="5.3"/>
<path d="M1337.2 622.4 L1339.8 624.8"/>
</svg><!--FOOT1--></div>
</body>
</html>
